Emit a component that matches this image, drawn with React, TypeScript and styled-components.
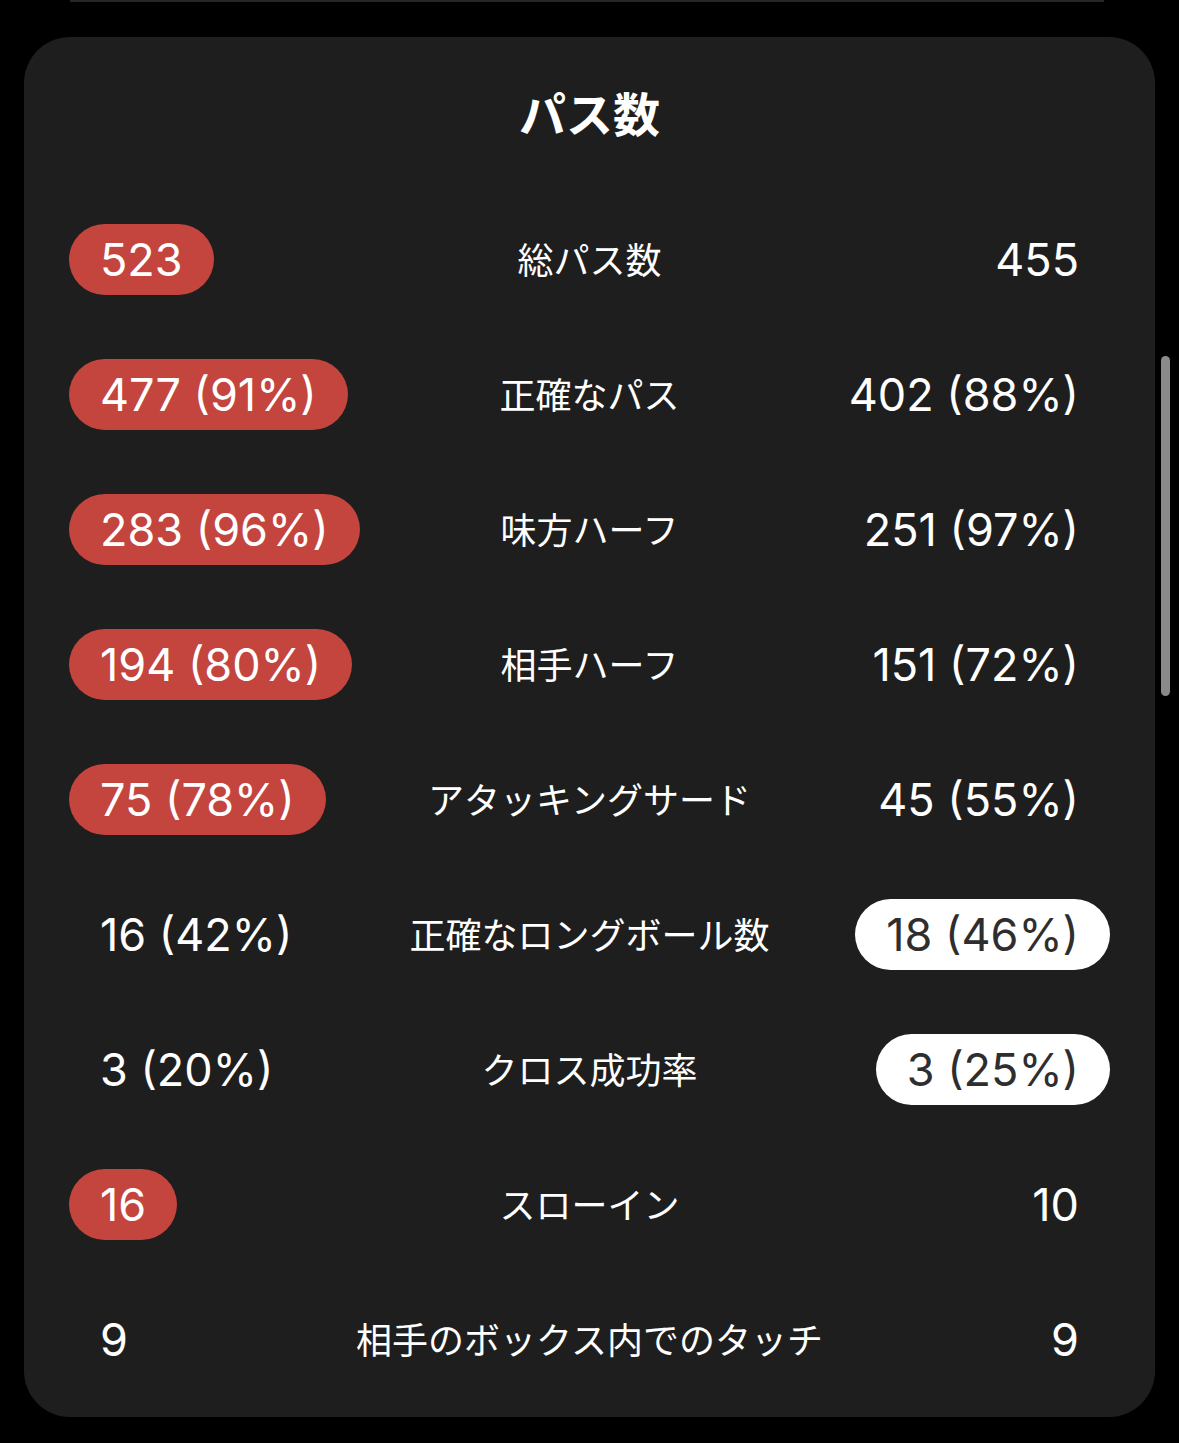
import React from 'react'
import styled, { createGlobalStyle } from 'styled-components'

type Highlight = 'home' | 'away' | undefined

interface StatRow {
  label: string
  home: string
  away: string
  win?: Highlight
}

const rows: StatRow[] = [
  { label: '総パス数', home: '523', away: '455', win: 'home' },
  { label: '正確なパス', home: '477 (91%)', away: '402 (88%)', win: 'home' },
  { label: '味方ハーフ', home: '283 (96%)', away: '251 (97%)', win: 'home' },
  { label: '相手ハーフ', home: '194 (80%)', away: '151 (72%)', win: 'home' },
  { label: 'アタッキングサード', home: '75 (78%)', away: '45 (55%)', win: 'home' },
  { label: '正確なロングボール数', home: '16 (42%)', away: '18 (46%)', win: 'away' },
  { label: 'クロス成功率', home: '3 (20%)', away: '3 (25%)', win: 'away' },
  { label: 'スローイン', home: '16', away: '10', win: 'home' },
  { label: '相手のボックス内でのタッチ', home: '9', away: '9' },
]

const PassStats: React.FC = () => {
  return (
    <Page>
      <GlobalStyle />
      <PrevCardEdge />
      <Card>
        <Title>パス数</Title>
        <List>
          {rows.map((row) => (
            <Row key={row.label}>
              <Side $align="start">
                <Value $variant={row.win === 'home' ? 'home' : undefined}>{row.home}</Value>
              </Side>
              <Label>{row.label}</Label>
              <Side $align="end">
                <Value $variant={row.win === 'away' ? 'away' : undefined}>{row.away}</Value>
              </Side>
            </Row>
          ))}
        </List>
      </Card>
      <ScrollThumb />
    </Page>
  )
}

const GlobalStyle = createGlobalStyle`
  html, body {
    margin: 0;
    padding: 0;
    background: #000;
  }
  body {
    font-family: Inter, "Noto Sans CJK JP", sans-serif;
    -webkit-font-smoothing: antialiased;
  }
`

const Page = styled.div`
  position: relative;
  min-height: 1443px;
  background: #000;
  padding: 0 24px 27px;
  box-sizing: border-box;
`

const PrevCardEdge = styled.div`
  height: 2px;
  margin: 0 51px 0 46px;
  background: #262626;
`

const Card = styled.div`
  margin-top: 35px;
  width: 1131px;
  background: #1e1e1e;
  border-radius: 46px;
  padding: 45px 45px 10px;
  box-sizing: border-box;
`

const Title = styled.div`
  height: 60px;
  line-height: 60px;
  margin-bottom: 50px;
  text-align: center;
  color: #fff;
  font-family: "Noto Sans CJK JP", sans-serif;
  font-weight: 700;
  font-size: 47px;
`

const List = styled.div`
  display: flex;
  flex-direction: column;
`

const Row = styled.div`
  display: grid;
  grid-template-columns: 1fr auto 1fr;
  align-items: center;
  height: 135px;
`

const Side = styled.div<{ $align: 'start' | 'end' }>`
  display: flex;
  justify-content: ${(p) => (p.$align === 'start' ? 'flex-start' : 'flex-end')};
`

const Value = styled.div<{ $variant?: 'home' | 'away' }>`
  height: 71px;
  display: flex;
  align-items: center;
  padding: 0 31px;
  border-radius: 36px;
  font-family: Inter, "Liberation Sans", sans-serif;
  font-size: 45px;
  font-weight: 400;
  letter-spacing: 0;
  white-space: nowrap;
  background: ${(p) => (p.$variant === 'home' ? '#c4443e' : p.$variant === 'away' ? '#ffffff' : 'transparent')};
  color: ${(p) => (p.$variant === 'away' ? '#2e2e2e' : '#ffffff')};
`

const Label = styled.div`
  padding: 0 24px;
  margin-top: -3px;
  text-align: center;
  color: #fff;
  font-family: "Noto Sans CJK JP", sans-serif;
  font-size: 36px;
  font-weight: 400;
  white-space: nowrap;
`

const ScrollThumb = styled.div`
  position: absolute;
  left: 1161px;
  top: 356px;
  width: 9px;
  height: 340px;
  border-radius: 5px;
  background: #8a8a8a;
`

export default PassStats
